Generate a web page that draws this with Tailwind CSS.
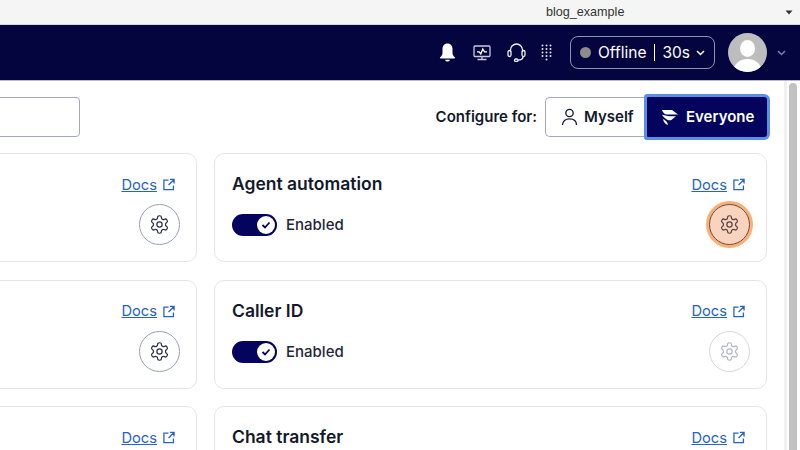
<!doctype html>
<html><head><meta charset="utf-8"><script src="https://cdn.jsdelivr.net/npm/@tailwindcss/browser@4"></script></head>
<body class="m-0 overflow-hidden bg-white">
<div class="w-[800px] h-[450px] overflow-hidden flex flex-col font-['Inter',sans-serif] text-[#12192b]">
  <div class="h-[25px] shrink-0 bg-[#f5f5f5] border-b border-[#d8d8d8] relative flex items-center">
    <span class="ml-[546px] font-['Liberation_Sans',sans-serif] text-[12.600px] text-[#333] leading-none">blog_example</span>
    <svg class="absolute left-[785px] top-[10px]" width="8" height="5" viewBox="0 0 8 5"><path d="M0.5 0.5h7L4 4.5z" fill="#333"/></svg>
  </div>
  <div class="h-[56px] shrink-0 bg-[#04043f] border-b border-[#b9bbc8] flex items-center justify-end pr-[14px]">
    <svg class="mr-[17px] mt-[-1px]" width="17" height="19" viewBox="0 0 17 19"><path d="M8.5 0.5c3.4 0 5 2.6 5 5.6v3.6c0 2 .9 3.4 2.4 4.6.5.5.2 1.2-.5 1.2H1.6c-.7 0-1-.7-.5-1.2C2.6 13.1 3.500 11.700 3.500 9.700V6.100c0-3 1.600-5.600 5-5.600z M6 16.800h5c-.3 1.100-1.300 1.800-2.500 1.800S6.300 17.900 6 16.800z" fill="#fff"/></svg>
    <svg class="mr-[16px]" width="18" height="16" viewBox="0 0 18 16" fill="none" stroke="#c9cbdb" stroke-width="1.300"><rect x="1" y="1" width="16" height="10.500" rx="1"/><path stroke="#fff" d="M4 6.800h2.200l1.600 2.200 2-5 1.700 2.800H14"/><path d="M9 11.500v2.500M4.500 14.500h9"/></svg>
    <svg class="mr-[15px] mt-[1px]" width="19" height="20" viewBox="0 0 19 20" fill="none" stroke="#f0f0f6" stroke-width="1.300"><path d="M3.500 9V7a6 6 0 0 1 12 0V9"/><rect x="1" y="7.500" width="3" height="6" rx="1.500"/><rect x="15" y="7.500" width="3" height="6" rx="1.500"/><path d="M16 13.500c0 2.500-2.200 3.700-5 3.700"/><rect x="7.500" y="16" width="3.500" height="2.400" rx="1.200"/></svg>
    <svg class="mr-[18px]" width="11" height="17" viewBox="0 0 11 17" fill="#e4e5ef"><circle cx="1.500" cy="1.500" r="1"/><circle cx="5.500" cy="1.500" r="1"/><circle cx="9.500" cy="1.500" r="1"/><circle cx="1.500" cy="5" r="1"/><circle cx="5.500" cy="5" r="1"/><circle cx="9.500" cy="5" r="1"/><circle cx="1.500" cy="8.500" r="1"/><circle cx="5.500" cy="8.500" r="1"/><circle cx="9.500" cy="8.500" r="1"/><circle cx="1.500" cy="12" r="1"/><circle cx="5.500" cy="12" r="1"/><circle cx="9.500" cy="12" r="1"/><circle cx="5.500" cy="15.500" r="1"/></svg>
    <div class="w-[145px] h-[33px] rounded-[8px] border border-[#8f92b3] flex items-center pl-[9px] text-white text-[15.500px] mr-[13px]">
      <span class="w-[11px] h-[11px] rounded-full bg-[#8c8c8c] mr-[7px]"></span>
      <span>Offline</span><span class="w-px h-[17px] bg-white ml-[8px] mr-[7px]"></span><span>30s</span>
      <svg class="ml-[6px]" width="9" height="6" viewBox="0 0 9 6" fill="none" stroke="#fff" stroke-width="1.500"><path d="M1 1l3.500 3.500L8 1"/></svg>
    </div>
    <div class="w-[39px] h-[39px] rounded-full bg-[#bdbdbd] overflow-hidden mr-[10px]">
      <svg width="39" height="39" viewBox="0 0 39 39" fill="#fff"><ellipse cx="19.500" cy="15.500" rx="7.500" ry="8.500"/><path d="M5 39c1-9 7-13 14.500-13S33 30 34 39z"/></svg>
    </div>
    <svg width="9" height="6" viewBox="0 0 9 6" fill="none" stroke="#7d7f9e" stroke-width="1.500"><path d="M1 1l3.500 3.500L8 1"/></svg>
  </div>
  <div class="flex-1 min-h-0 flex">
    <div class="w-[784px] shrink-0 overflow-hidden">
      <div class="h-[72px] flex items-start relative">
        <div class="ml-[-20px] mt-[16px] w-[100px] h-[40px] rounded-[4px] border border-[#a3a8bc]"></div>
        <div class="ml-auto mr-[17px] mt-[16px] flex items-center">
          <span class="text-[15px] font-semibold mr-[8px]">Configure for:</span>
          <div class="flex h-[40px] items-center">
            <div class="w-[102px] h-[40px] rounded-l-[5px] border border-[#a3a8bc] border-r-0 flex items-center pl-[15px] gap-[6px] text-[15px] font-semibold">
              <svg width="17" height="18" viewBox="0 0 17 18" fill="none" stroke="#12192b" stroke-width="1.300"><circle cx="8.500" cy="5" r="3.700"/><path d="M1.500 17c0-4 3-6.200 7-6.200s7 2.200 7 6.200"/></svg>
              <span>Myself</span>
            </div>
            <div class="w-[120px] h-[40px] rounded-r-[3px] bg-[#04045f] ring-[3px] ring-[#5b8fe6] rounded-l-[1px] flex items-center pl-[15px] gap-[8px] text-[15px] font-semibold text-white relative">
              <svg width="16" height="15" viewBox="0 0 16 15" fill="#fff"><path d="M0 0H10L16 4.500H5C3 4.500 1 3 0 0z"/><path d="M0 4.800L7 6.300H14L9 10.300H6.500C3.500 9 1 7 0 4.800z"/><path d="M1 9C3.500 10 5.500 12 6 15C3.500 14.500 1.500 12 1 9z"/></svg>
              <span>Everyone</span>
            </div>
          </div>
        </div>
      </div>
      <div class="ml-[-356px] w-[1123px] grid grid-cols-[553px_553px] gap-x-[17px] gap-y-[17.500px]">
        <div class="h-[109px] rounded-[10px] border border-[#e3e5ea] relative">
          <a class="absolute right-[21px] top-[20.500px] flex items-center gap-[6px] text-[14.700px] leading-[20px] text-[#2563c9] underline">Docs<svg width="12" height="13" viewBox="0 0 13 13" fill="none" stroke="#2563c9" stroke-width="1.400"><path d="M6 1.700H1v10.300h10.300V7.500M7.500 1h4.500v4.500M12 1L6 7"/></svg></a>
          <div class="absolute right-[16px] top-[50px] w-[41px] h-[41px] rounded-full border border-[#9a9fb3] flex items-center justify-center">
            <svg width="21" height="21" viewBox="0 0 24 24" fill="none" stroke="#2b3040" stroke-width="1.400" stroke-linecap="round" stroke-linejoin="round"><path d="M12.220 2h-.44a2 2 0 0 0-2 2v.18a2 2 0 0 1-1 1.730l-.43.250a2 2 0 0 1-2 0l-.15-.08a2 2 0 0 0-2.730.730l-.22.380a2 2 0 0 0 .730 2.730l.15.100a2 2 0 0 1 1 1.720v.510a2 2 0 0 1-1 1.740l-.15.090a2 2 0 0 0-.730 2.730l.22.380a2 2 0 0 0 2.730.730l.15-.08a2 2 0 0 1 2 0l.43.250a2 2 0 0 1 1 1.730V20a2 2 0 0 0 2 2h.44a2 2 0 0 0 2-2v-.18a2 2 0 0 1 1-1.730l.43-.250a2 2 0 0 1 2 0l.15.080a2 2 0 0 0 2.730-.730l.22-.390a2 2 0 0 0-.730-2.730l-.15-.080a2 2 0 0 1-1-1.740v-.500a2 2 0 0 1 1-1.740l.15-.090a2 2 0 0 0 .730-2.730l-.22-.380a2 2 0 0 0-2.730-.730l-.15.080a2 2 0 0 1-2 0l-.43-.250a2 2 0 0 1-1-1.730V4a2 2 0 0 0-2-2z"/><circle cx="12" cy="12" r="3"/></svg>
          </div>
        </div>
        <div class="h-[109px] rounded-[10px] border border-[#e3e5ea] relative">
          <div class="absolute left-[17px] top-[19px] text-[17.500px] leading-[22px] font-semibold">Agent automation</div>
          <div class="absolute left-[17px] top-[60px] flex items-center gap-[9px] text-[15px] font-[450] leading-[22px] text-[#1f2638]">
            <span class="w-[45px] h-[22px] rounded-full bg-[#04045f] flex items-center justify-end pr-[1px]"><span class="w-[18px] h-[18px] mr-[1px] rounded-full bg-white flex items-center justify-center"><svg width="10" height="8" viewBox="0 0 10 8" fill="none" stroke="#04045f" stroke-width="1.800"><path d="M1.500 4l2.500 2.500L8.500 1.500"/></svg></span></span>
            <span>Enabled</span>
          </div>
          <a class="absolute right-[21px] top-[20.500px] flex items-center gap-[6px] text-[14.700px] leading-[20px] text-[#2563c9] underline">Docs<svg width="12" height="13" viewBox="0 0 13 13" fill="none" stroke="#2563c9" stroke-width="1.400"><path d="M6 1.700H1v10.300h10.300V7.500M7.500 1h4.500v4.500M12 1L6 7"/></svg></a>
          <div class="absolute right-[16px] top-[50px] w-[41px] h-[41px] rounded-full border border-[#6b4a50] bg-[#f8d3bd] ring-[3px] ring-[#fbb071] flex items-center justify-center">
            <svg width="21" height="21" viewBox="0 0 24 24" fill="none" stroke="#5b4048" stroke-width="1.400" stroke-linecap="round" stroke-linejoin="round"><path d="M12.220 2h-.44a2 2 0 0 0-2 2v.18a2 2 0 0 1-1 1.730l-.43.250a2 2 0 0 1-2 0l-.15-.08a2 2 0 0 0-2.730.730l-.22.380a2 2 0 0 0 .730 2.730l.15.100a2 2 0 0 1 1 1.720v.510a2 2 0 0 1-1 1.740l-.15.090a2 2 0 0 0-.730 2.730l.22.380a2 2 0 0 0 2.730.730l.15-.08a2 2 0 0 1 2 0l.43.250a2 2 0 0 1 1 1.730V20a2 2 0 0 0 2 2h.44a2 2 0 0 0 2-2v-.18a2 2 0 0 1 1-1.730l.43-.250a2 2 0 0 1 2 0l.15.080a2 2 0 0 0 2.730-.730l.22-.390a2 2 0 0 0-.730-2.730l-.15-.080a2 2 0 0 1-1-1.740v-.500a2 2 0 0 1 1-1.740l.15-.090a2 2 0 0 0 .730-2.730l-.22-.380a2 2 0 0 0-2.730-.730l-.15.080a2 2 0 0 1-2 0l-.43-.250a2 2 0 0 1-1-1.730V4a2 2 0 0 0-2-2z"/><circle cx="12" cy="12" r="3"/></svg>
          </div>
        </div>
        <div class="h-[109px] rounded-[10px] border border-[#e3e5ea] relative">
          <a class="absolute right-[21px] top-[20.500px] flex items-center gap-[6px] text-[14.700px] leading-[20px] text-[#2563c9] underline">Docs<svg width="12" height="13" viewBox="0 0 13 13" fill="none" stroke="#2563c9" stroke-width="1.400"><path d="M6 1.700H1v10.300h10.300V7.500M7.500 1h4.500v4.500M12 1L6 7"/></svg></a>
          <div class="absolute right-[16px] top-[50px] w-[41px] h-[41px] rounded-full border border-[#9a9fb3] flex items-center justify-center">
            <svg width="21" height="21" viewBox="0 0 24 24" fill="none" stroke="#2b3040" stroke-width="1.400" stroke-linecap="round" stroke-linejoin="round"><path d="M12.220 2h-.44a2 2 0 0 0-2 2v.18a2 2 0 0 1-1 1.730l-.43.250a2 2 0 0 1-2 0l-.15-.08a2 2 0 0 0-2.730.730l-.22.380a2 2 0 0 0 .730 2.730l.15.100a2 2 0 0 1 1 1.720v.510a2 2 0 0 1-1 1.740l-.15.090a2 2 0 0 0-.730 2.730l.22.380a2 2 0 0 0 2.730.730l.15-.08a2 2 0 0 1 2 0l.43.250a2 2 0 0 1 1 1.730V20a2 2 0 0 0 2 2h.44a2 2 0 0 0 2-2v-.18a2 2 0 0 1 1-1.730l.43-.250a2 2 0 0 1 2 0l.15.080a2 2 0 0 0 2.730-.730l.22-.390a2 2 0 0 0-.730-2.730l-.15-.080a2 2 0 0 1-1-1.740v-.500a2 2 0 0 1 1-1.740l.15-.090a2 2 0 0 0 .730-2.730l-.22-.380a2 2 0 0 0-2.730-.730l-.15.080a2 2 0 0 1-2 0l-.43-.250a2 2 0 0 1-1-1.730V4a2 2 0 0 0-2-2z"/><circle cx="12" cy="12" r="3"/></svg>
          </div>
        </div>
        <div class="h-[109px] rounded-[10px] border border-[#e3e5ea] relative">
          <div class="absolute left-[17px] top-[19px] text-[17.500px] leading-[22px] font-semibold">Caller ID</div>
          <div class="absolute left-[17px] top-[60px] flex items-center gap-[9px] text-[15px] font-[450] leading-[22px] text-[#1f2638]">
            <span class="w-[45px] h-[22px] rounded-full bg-[#04045f] flex items-center justify-end pr-[1px]"><span class="w-[18px] h-[18px] mr-[1px] rounded-full bg-white flex items-center justify-center"><svg width="10" height="8" viewBox="0 0 10 8" fill="none" stroke="#04045f" stroke-width="1.800"><path d="M1.500 4l2.500 2.500L8.500 1.500"/></svg></span></span>
            <span>Enabled</span>
          </div>
          <a class="absolute right-[21px] top-[20.500px] flex items-center gap-[6px] text-[14.700px] leading-[20px] text-[#2563c9] underline">Docs<svg width="12" height="13" viewBox="0 0 13 13" fill="none" stroke="#2563c9" stroke-width="1.400"><path d="M6 1.700H1v10.300h10.300V7.500M7.500 1h4.500v4.500M12 1L6 7"/></svg></a>
          <div class="absolute right-[16px] top-[50px] w-[41px] h-[41px] rounded-full border border-[#d5d7df] flex items-center justify-center">
            <svg width="21" height="21" viewBox="0 0 24 24" fill="none" stroke="#b4b7c2" stroke-width="1.400" stroke-linecap="round" stroke-linejoin="round"><path d="M12.220 2h-.44a2 2 0 0 0-2 2v.18a2 2 0 0 1-1 1.730l-.43.250a2 2 0 0 1-2 0l-.15-.08a2 2 0 0 0-2.730.730l-.22.380a2 2 0 0 0 .730 2.730l.15.100a2 2 0 0 1 1 1.720v.510a2 2 0 0 1-1 1.740l-.15.090a2 2 0 0 0-.730 2.730l.22.380a2 2 0 0 0 2.730.730l.15-.08a2 2 0 0 1 2 0l.43.250a2 2 0 0 1 1 1.730V20a2 2 0 0 0 2 2h.44a2 2 0 0 0 2-2v-.18a2 2 0 0 1 1-1.730l.43-.250a2 2 0 0 1 2 0l.15.080a2 2 0 0 0 2.730-.730l.22-.390a2 2 0 0 0-.730-2.730l-.15-.080a2 2 0 0 1-1-1.740v-.500a2 2 0 0 1 1-1.740l.15-.090a2 2 0 0 0 .730-2.730l-.22-.380a2 2 0 0 0-2.730-.730l-.15.080a2 2 0 0 1-2 0l-.43-.250a2 2 0 0 1-1-1.730V4a2 2 0 0 0-2-2z"/><circle cx="12" cy="12" r="3"/></svg>
          </div>
        </div>
        <div class="h-[109px] rounded-[10px] border border-[#e3e5ea] relative">
          <a class="absolute right-[21px] top-[20.500px] flex items-center gap-[6px] text-[14.700px] leading-[20px] text-[#2563c9] underline">Docs<svg width="12" height="13" viewBox="0 0 13 13" fill="none" stroke="#2563c9" stroke-width="1.400"><path d="M6 1.700H1v10.300h10.300V7.500M7.500 1h4.500v4.500M12 1L6 7"/></svg></a>
        </div>
        <div class="h-[109px] rounded-[10px] border border-[#e3e5ea] relative">
          <div class="absolute left-[17px] top-[19px] text-[17.500px] leading-[22px] font-semibold">Chat transfer</div>
          <a class="absolute right-[21px] top-[20.500px] flex items-center gap-[6px] text-[14.700px] leading-[20px] text-[#2563c9] underline">Docs<svg width="12" height="13" viewBox="0 0 13 13" fill="none" stroke="#2563c9" stroke-width="1.400"><path d="M6 1.700H1v10.300h10.300V7.500M7.500 1h4.500v4.500M12 1L6 7"/></svg></a>
        </div>
      </div>
    </div>
    <div class="flex-1 bg-white border-l-[3px] border-[#f0f0f0] pl-[2px] pr-[3px] pt-[2px]">
      <div class="h-[369px] rounded-t-full bg-[#c2c2c2]"></div>
    </div>
  </div>
</div>
</body></html>
